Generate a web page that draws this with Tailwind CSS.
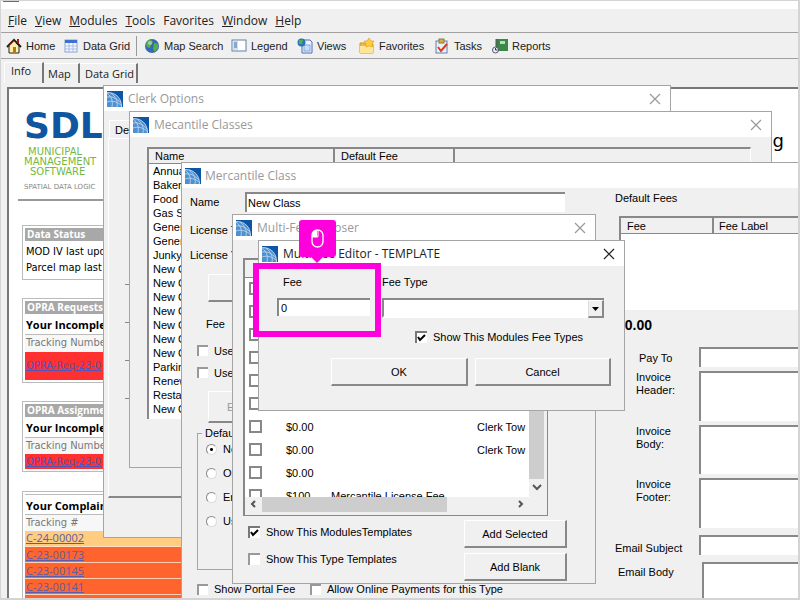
<!DOCTYPE html>
<html lang="en">
<head>
  <meta charset="UTF-8">
  <title>Clerk Options</title>
  <script src="https://cdn.jsdelivr.net/npm/@tailwindcss/browser@4"></script>
</head>
<body class="bg-[#f0f0f0] text-black text-[11px] leading-[14px] font-['Liberation_Sans',sans-serif] overflow-hidden">
  <svg class="hidden">
    <symbol id="globe" viewBox="0 0 16 16">
      <rect width="16" height="16" fill="#0d55a5"/>
      <path d="M0 1C9 1 15 7 15 16H0Z" fill="#4f90d0"/>
      <path d="M0 1.500C9 1.500 14.500 7 14.500 16M0 6C6 5 10 8 14 12M0 11C5 9 11 11 15 15M4 2C9 6 11 10 10 16M0 2C5 6 6 10 5 16" fill="none" stroke="#c3dbf2" stroke-width=".8"/>
    </symbol>
    <symbol id="close" viewBox="0 0 12 12">
      <path d="M1 1L11 11M11 1L1 11" fill="none" stroke="currentColor" stroke-width="1.2"/>
    </symbol>
  </svg>

  <div class="relative h-screen overflow-hidden flex flex-col border-l border-t border-r-2 border-b-2 border-[#d4d4d4]">
    <!-- main window -->
    <div class="h-2 bg-white shrink-0 pl-[2px]"><div class="w-4 h-px bg-[#3a78b0]"></div></div>
    <nav class="h-6 shrink-0 flex items-center gap-2 pl-[7px] text-[12px] font-['Open_Sans',sans-serif] text-[#222] border-b border-[#a0a0a0]">
      <a href="#"><u>F</u>ile</a>
      <a href="#"><u>V</u>iew</a>
      <a href="#"><u>M</u>odules</a>
      <a href="#"><u>T</u>ools</a>
      <a href="#">Favorites</a>
      <a href="#"><u>W</u>indow</a>
      <a href="#"><u>H</u>elp</a>
    </nav>
    <div class="h-[26px] shrink-0 flex items-center pl-[5px] border-b border-[#a0a0a0] text-[#222]">
      <button class="flex items-center gap-1 w-[57px]">
        <svg class="w-4 h-4" viewBox="0 0 16 16"><path d="M3 8v7h10V8L8 3Z" fill="#fff0a8" stroke="#222"/><path d="M1 9L8 2l7 7" fill="none" stroke="#222" stroke-width="2"/><path d="M3 8l5-5 2 2" fill="none" stroke="#c03020"/><path d="M11 1h2v4h-2z" fill="#a02018"/><rect x="7" y="9" width="3" height="6" fill="#b87818"/></svg>
        Home
      </button>
      <button class="flex items-center gap-1 w-[72px]">
        <svg class="w-4 h-4" viewBox="0 0 16 16"><rect x="2" y="2" width="12" height="12" fill="#f4f8ff" stroke="#8aa4d8"/><rect x="2" y="2" width="12" height="3" fill="#3f6fd0"/><path d="M2 8h12M2 11h12M6 5v9M10 5v9" stroke="#a9bde6"/></svg>
        Data Grid
      </button>
      <div class="w-px h-5 bg-[#999] mr-[7px] ml-px"></div>
      <button class="flex items-center gap-1 w-[87px]">
        <svg class="w-4 h-4" viewBox="0 0 16 16"><circle cx="8" cy="8" r="7" fill="#3568b8"/><path d="M3 3c3-2 5-1 6 1L7 7l-1 3-3-1-1-3ZM10 5l4 1v4l-3 4-2-3Z" fill="#58b040"/><circle cx="6" cy="5" r="2" fill="#cfe8e0" opacity=".6"/></svg>
        Map Search
      </button>
      <button class="flex items-center gap-1 w-[66px]">
        <svg class="w-4 h-4" viewBox="0 0 16 16"><rect x="1" y="2" width="14" height="11" fill="#fff" stroke="#5f7fa8"/><rect x="2" y="3" width="5" height="9" fill="#cfe0f5"/><path d="M3 5h3M3 7h3M3 9h3" stroke="#3f6fb0"/></svg>
        Legend
      </button>
      <button class="flex items-center gap-1 w-[62px]">
        <svg class="w-4 h-4" viewBox="0 0 16 16"><path d="M5 2h8l2 2v11H5Z" fill="#eef4ff" stroke="#4a6fb0"/><rect x="7" y="7" width="6" height="6" fill="#c9dcf5" stroke="#86a6d8"/><circle cx="4.500" cy="4.500" r="4" fill="#2f74b8"/><path d="M2 2l4 0-1 4-3 0Z" fill="#50b050"/></svg>
        Views
      </button>
      <button class="flex items-center gap-1 w-[75px]">
        <svg class="w-4 h-4" viewBox="0 0 16 16"><path d="M1 5h5l1 1h7v9H1Z" fill="#f0b848" stroke="#d8942c"/><path d="M1 8h13v7H1Z" fill="#ffe596"/><path d="M10 0l2 3 3 0-2 3 1 3-4-1-3 1 0-3-2-3 3 0Z" fill="#ffce3c" stroke="#d89c20" stroke-width=".6"/></svg>
        Favorites
      </button>
      <button class="flex items-center gap-1 w-[58px]">
        <svg class="w-4 h-4" viewBox="0 0 16 16"><rect x="2" y="3" width="11" height="12" fill="#e8f0fc" stroke="#6080b0"/><rect x="5" y="1" width="5" height="4" fill="#d0b050" stroke="#907830"/><path d="M4 9l3 4 6-7" fill="none" stroke="#e03818" stroke-width="2"/></svg>
        Tasks
      </button>
      <button class="flex items-center gap-1">
        <svg class="w-4 h-4" viewBox="0 0 16 16"><rect x="4" y="1" width="12" height="12" fill="#3c8848"/><rect x="8" y="3" width="5" height="3" fill="#b8dcb8"/><path d="M3 2h3M3 4h3M3 6h3M3 8h3" stroke="#556"/><circle cx="3.500" cy="12" r="3" fill="#eef" stroke="#556"/><path d="M3.500 10v2h2" fill="none" stroke="#333"/></svg>
        Reports
      </button>
    </div>
    <div class="flex items-end shrink-0 h-6 pl-[3px] font-['Open_Sans',sans-serif] text-[#222]">
      <button class="h-[21px] w-10 text-left pl-[6px] pb-1 border-t border-l border-white border-r-2 border-r-[#777]">Info</button>
      <button class="h-5 w-9 text-left pl-1 border-t border-white border-r-2 border-r-[#777]">Map</button>
      <button class="h-5 w-[58px] text-left pl-[5px] border-t border-white border-r-2 border-r-[#777]">Data Grid</button>
    </div>
    <main class="mt-1 ml-[6px] flex-1 min-h-0 overflow-hidden flex bg-white border-t-2 border-l-2 border-[#777]">
      <aside class="w-[212px] shrink-0 pl-[13px] font-['DejaVu_Sans_Condensed','DejaVu_Sans',sans-serif]">
        <div class="w-[120px] ml-[2px] pt-[16px] font-['DejaVu_Sans',sans-serif]">
          <div class="text-[36px] leading-[42px] font-bold text-[#0f55a0]">SDL</div>
          <div class="text-[10px] leading-[10px] text-[#76b83f]">
            <p class="pl-1">MUNICIPAL</p>
            <p>MANAGEMENT</p>
            <p class="pl-[6px]">SOFTWARE</p>
          </div>
          <p class="mt-[4px] text-[7px] leading-[12px] text-[#888] whitespace-nowrap">SPATIAL DATA LOGIC</p>
        </div>
        <div class="h-[2px] -ml-1 mt-[6px] bg-[#999]"></div>

        <section class="mt-6 p-[2px] border border-[#bbb]">
          <h3 class="h-[13px] leading-[13px] pl-[2px] bg-[#a8a8a8] text-white text-[10px] font-bold font-['Open_Sans',sans-serif]">Data Status</h3>
          <p class="pl-px leading-4 mt-[3px]">MOD IV last updated</p>
          <p class="pl-px leading-4 mb-px">Parcel map last updated</p>
        </section>

        <section class="mt-[18px] p-[2px] border border-[#bbb]">
          <h3 class="h-[13px] leading-[13px] pl-[2px] bg-[#a8a8a8] text-white text-[10px] font-bold font-['Open_Sans',sans-serif]">OPRA Requests</h3>
          <p class="pl-px h-[21px] leading-[21px] font-bold font-['Open_Sans',sans-serif] border-b border-[#bbb]">Your Incomplete</p>
          <p class="pl-px h-[17px] leading-[15px] text-[#777] bg-[#f7f7f7]">Tracking Number</p>
          <p class="pl-px h-7 leading-7 bg-[#ff3030]"><a href="#" class="underline text-[#5555b8]">OPRA-Req-23-0</a></p>
        </section>

        <section class="mt-[18px] p-[2px] border border-[#bbb]">
          <h3 class="h-[13px] leading-[13px] pl-[2px] bg-[#a8a8a8] text-white text-[10px] font-bold font-['Open_Sans',sans-serif]">OPRA Assignments</h3>
          <p class="pl-px h-[21px] leading-[21px] font-bold font-['Open_Sans',sans-serif] border-b border-[#bbb]">Your Incomplete</p>
          <p class="pl-px h-4 leading-[15px] text-[#777] bg-[#f7f7f7]">Tracking Number</p>
          <p class="pl-px h-[15px] leading-[15px] bg-[#ff3030]"><a href="#" class="underline text-[#5555b8]">OPRA-Req-23-0</a></p>
        </section>

        <section class="mt-[19px] p-[2px] border border-[#bbb]">
          <table class="w-full text-left">
            <tr><td class="p-0 pl-px pt-[3px] h-5 font-bold font-['Open_Sans',sans-serif] border-t border-b border-[#bbb]">Your Complaints</td></tr>
            <tr><th class="p-0 pl-px h-4 font-normal text-[#777] bg-[#f7f7f7]">Tracking #</th></tr>
            <tr class="h-4 bg-[#ffcc80] border-b border-[#ffe0c0]"><td class="p-0 pl-px font-['Open_Sans',sans-serif]"><a href="#" class="underline text-[#5c5ca8]">C-24-00002</a></td></tr>
            <tr class="h-4 bg-[#ff642e] border-b border-[#ffd0b0]"><td class="p-0 pl-px font-['Open_Sans',sans-serif]"><a href="#" class="underline text-[#5c5ca8]">C-23-00173</a></td></tr>
            <tr class="h-4 bg-[#ff642e] border-b border-[#ffd0b0]"><td class="p-0 pl-px font-['Open_Sans',sans-serif]"><a href="#" class="underline text-[#5c5ca8]">C-23-00145</a></td></tr>
            <tr class="h-4 bg-[#ff642e] border-b border-[#ffd0b0]"><td class="p-0 pl-px font-['Open_Sans',sans-serif]"><a href="#" class="underline text-[#5c5ca8]">C-23-00141</a></td></tr>
            <tr class="h-4 bg-[#ff642e]"><td class="p-0 pl-px font-['Open_Sans',sans-serif]"><a href="#" class="underline text-[#5c5ca8]">C-23-00134</a></td></tr>
          </table>
        </section>
      </aside>
      <p class="flex-1 text-right pr-[14px] pt-10 text-[18px] leading-6 font-['DejaVu_Sans',sans-serif]">g</p>
    </main>

    <!-- Clerk Options -->
    <section class="absolute left-[102px] top-[84px] w-[568px] h-[453px] flex flex-col bg-[#f0f0f0] border border-[#a5a5a5]">
      <header class="h-[25px] shrink-0 bg-white flex items-center pl-[3px] pr-[9px] text-[12px] text-[#999] font-['Open_Sans',sans-serif]">
        <svg class="w-4 h-4 mr-[5px]"><use href="#globe"/></svg>
        <h2 class="flex-1">Clerk Options</h2>
        <button aria-label="Close"><svg class="w-3 h-3"><use href="#close"/></svg></button>
      </header>
      <button class="self-start mt-[9px] ml-[5px] h-[18px] w-[60px] pl-[5px] text-left border-t border-l border-white">Default</button>
      <div class="mx-1 h-[360px] pl-4 flex flex-col gap-[10px] pt-[118px] border-l border-t border-white border-b-2 border-b-[#888]">
        <button class="w-20 h-7 border-b border-[#888]" aria-label="Classes"></button>
        <button class="w-20 h-7 border-b border-[#888]" aria-label="Fees"></button>
        <button class="w-20 h-7 border-b border-[#888]" aria-label="Types"></button>
        <button class="w-20 h-7 border-b border-[#888]" aria-label="Templates"></button>
      </div>
    </section>

    <!-- Mecantile Classes -->
    <section class="absolute left-[128px] top-[110px] w-[643px] h-[357px] flex flex-col bg-[#f0f0f0] border border-[#a5a5a5]">
      <header class="h-[25px] shrink-0 bg-white flex items-center pl-[3px] pr-[9px] text-[12px] text-[#999] font-['Open_Sans',sans-serif]">
        <svg class="w-4 h-4 mr-[5px]"><use href="#globe"/></svg>
        <h2 class="flex-1">Mecantile Classes</h2>
        <button aria-label="Close"><svg class="w-3 h-3"><use href="#close"/></svg></button>
      </header>
      <div class="mt-[10px] ml-[17px] mr-5 h-[272px] overflow-hidden bg-white border-t-2 border-l-2 border-[#888] border-r border-r-white">
        <div class="grid grid-cols-[186px_120px_1fr] h-[15px] bg-[#f0f0f0] border-b border-[#888]">
          <span class="pl-[6px] border-r-2 border-[#888]">Name</span>
          <span class="pl-[6px] border-r-2 border-[#888]">Default Fee</span>
          <span></span>
        </div>
        <ul class="pl-1">
          <li>Annual</li>
          <li>Bakery</li>
          <li>Food Truck</li>
          <li>Gas Station</li>
          <li>General</li>
          <li>General</li>
          <li>Junkyard</li>
          <li>New Class</li>
          <li>New Class</li>
          <li>New Class</li>
          <li>New Class</li>
          <li>New Class</li>
          <li>New Class</li>
          <li>New Class</li>
          <li>Parking</li>
          <li>Renewal</li>
          <li>Restaurant</li>
          <li>New Class</li>
        </ul>
      </div>
    </section>

    <!-- Mercantile Class -->
    <section class="absolute left-[180px] right-0 top-[161px] bottom-0 flex flex-col overflow-hidden bg-[#f0f0f0] border-t border-l border-[#a5a5a5]">
      <header class="h-[25px] shrink-0 bg-white flex items-center pl-[3px] text-[12px] text-[#999] font-['Open_Sans',sans-serif]">
        <svg class="w-4 h-4 mr-1"><use href="#globe"/></svg>
        <h2>Mercantile Class</h2>
      </header>
      <div class="flex-1 min-h-0 flex">
        <div class="w-[433px] shrink-0 pl-2 pt-1">
          <div class="flex items-center h-5">
            <label for="name" class="w-[55px]">Name</label>
            <input id="name" value="New Class" class="w-80 h-5 px-px bg-white border-t-2 border-l-2 border-[#888]">
          </div>
          <p class="h-4 mt-[10px] leading-4">License Type</p>
          <p class="h-4 mt-[9px] leading-4">License Year</p>
          <button class="block ml-[18px] mt-[11px] w-[100px] h-7 border-t border-l border-white border-b-2 border-b-[#888]" aria-label="Fees"></button>
          <p class="ml-4 mt-[15px]">Fee</p>
          <label class="flex items-center gap-[6px] ml-[7px] mt-[13px] h-[13px]"><input type="checkbox" class="appearance-none w-[11px] h-[11px] bg-white border-t-2 border-l-2 border-[#999]">Use Default</label>
          <label class="flex items-center gap-[6px] ml-[7px] mt-[9px] h-[13px]"><input type="checkbox" class="appearance-none w-[11px] h-[11px] bg-white border-t-2 border-l-2 border-[#999]">Use Portal</label>
          <button class="block ml-[18px] mt-3 w-[100px] h-8 pl-[18px] text-left text-[#999] border-t border-l border-white border-b-2 border-b-[#888]">Edit</button>
          <fieldset class="ml-[7px] mt-[3px] w-[300px] h-[144px] pl-2 border border-[#a5a5a5]">
            <legend class="-ml-1 px-[3px]">Default</legend>
            <label class="flex items-center gap-[6px] h-[14px] mt-[2px]"><input type="radio" name="due" checked class="appearance-none w-[11px] h-[11px] rounded-full bg-[radial-gradient(circle,#000_1px,#fff_2px)] border border-[#888] border-r-[#ddd] border-b-[#ddd]">None</label>
            <label class="flex items-center gap-[6px] h-[14px] mt-[10px]"><input type="radio" name="due" class="appearance-none w-[11px] h-[11px] rounded-full bg-white border border-[#888] border-r-[#ddd] border-b-[#ddd]">On</label>
            <label class="flex items-center gap-[6px] h-[14px] mt-[10px]"><input type="radio" name="due" class="appearance-none w-[11px] h-[11px] rounded-full bg-white border border-[#888] border-r-[#ddd] border-b-[#ddd]">End</label>
            <label class="flex items-center gap-[6px] h-[14px] mt-[10px]"><input type="radio" name="due" class="appearance-none w-[11px] h-[11px] rounded-full bg-white border border-[#888] border-r-[#ddd] border-b-[#ddd]">Use</label>
          </fieldset>
          <div class="flex ml-[7px] mt-3">
            <label class="flex items-center gap-[6px] w-[113px]"><input type="checkbox" class="appearance-none w-[11px] h-[11px] bg-white border-t-2 border-l-2 border-[#999]">Show Portal Fee</label>
            <label class="flex items-center gap-[6px]"><input type="checkbox" class="appearance-none w-[11px] h-[11px] bg-white border-t-2 border-l-2 border-[#999]">Allow Online Payments for this Type</label>
          </div>
        </div>
        <div class="flex-1 min-w-0 pt-[3px]">
          <h3>Default Fees</h3>
          <div class="mt-[11px] ml-1 h-[94px] bg-white border-t-2 border-l-2 border-[#888]">
            <div class="flex h-4 bg-[#f0f0f0] border-b border-[#888] leading-[17px]">
              <span class="w-[93px] pl-[6px] border-r-2 border-[#888]">Fee</span>
              <span class="pl-[5px]">Fee Label</span>
            </div>
          </div>
          <p class="mt-2 ml-[2px] text-[14px] font-bold">$0.00</p>
          <div class="mt-[15px] grid grid-cols-[84px_1fr] gap-y-1">
            <label for="pay" class="pl-6 pt-1">Pay To</label>
            <input id="pay" class="w-full min-w-0 h-5 bg-white border-t-2 border-l-2 border-[#888]">
            <label for="header" class="pl-[21px] leading-[13px]">Invoice<br>Header:</label>
            <textarea id="header" class="block w-full h-[50px] resize-none bg-white border-t-2 border-l-2 border-[#888]"></textarea>
            <label for="body" class="pl-[21px] leading-[13px]">Invoice<br>Body:</label>
            <textarea id="body" class="block w-full h-[49px] resize-none bg-white border-t-2 border-l-2 border-[#888]"></textarea>
            <label for="footer" class="pl-[21px] leading-[13px]">Invoice<br>Footer:</label>
            <textarea id="footer" class="block w-full h-[50px] resize-none bg-white border-t-2 border-l-2 border-[#888]"></textarea>
            <label for="subject" class="pt-[9px]">Email Subject</label>
            <input id="subject" class="mt-[3px] w-full min-w-0 h-5 bg-white border-t-2 border-l-2 border-[#888]">
            <label for="mail" class="pl-[3px] pt-[6px]">Email Body</label>
            <div class="pl-[3px] pt-[3px]"><textarea id="mail" class="block w-full h-[50px] resize-none bg-white border-t-2 border-l-2 border-[#888]"></textarea></div>
          </div>
        </div>
      </div>
    </section>

    <!-- Multi-Fee Chooser -->
    <section class="absolute left-[231px] top-[213px] w-[364px] h-[370px] flex flex-col bg-[#f0f0f0] border border-[#a5a5a5]">
      <header class="h-[25px] shrink-0 bg-white flex items-center pl-[3px] pr-[9px] text-[12px] text-[#999] font-['Open_Sans',sans-serif]">
        <svg class="w-4 h-4 mr-[5px]"><use href="#globe"/></svg>
        <h2 class="flex-1">Multi-Fee Chooser</h2>
        <button aria-label="Close"><svg class="w-3 h-3"><use href="#close"/></svg></button>
      </header>
      <div class="mt-[18px] ml-[10px] w-[305px] h-[258px] flex flex-col border-2 border-[#888] border-r border-b">
        <div class="flex flex-1 min-h-0">
          <div class="flex-1 overflow-hidden bg-white">
            <table class="w-full table-fixed text-left">
              <thead>
                <tr class="h-[17px] bg-[#f0f0f0] border-b border-[#888]"><th class="w-[41px] p-0 pl-2 font-normal">Fee</th><th class="w-[45px]"></th><th></th><th class="w-[52px]"></th></tr>
              </thead>
              <tbody>
                <tr class="h-[23px]"><td class="p-0 pl-1"><input type="checkbox" aria-label="Select fee" class="appearance-none block w-[13px] h-[13px] bg-white border-2 border-[#888]"></td></tr>
                <tr class="h-[23px]"><td class="p-0 pl-1"><input type="checkbox" aria-label="Select fee" class="appearance-none block w-[13px] h-[13px] bg-white border-2 border-[#888]"></td></tr>
                <tr class="h-[23px]"><td class="p-0 pl-1"><input type="checkbox" aria-label="Select fee" class="appearance-none block w-[13px] h-[13px] bg-white border-2 border-[#888]"></td></tr>
                <tr class="h-[23px]"><td class="p-0 pl-1"><input type="checkbox" aria-label="Select fee" class="appearance-none block w-[13px] h-[13px] bg-white border-2 border-[#888]"></td></tr>
                <tr class="h-[23px]"><td class="p-0 pl-1"><input type="checkbox" aria-label="Select fee" class="appearance-none block w-[13px] h-[13px] bg-white border-2 border-[#888]"></td></tr>
                <tr class="h-[23px]"><td class="p-0 pl-1"><input type="checkbox" aria-label="Select fee" class="appearance-none block w-[13px] h-[13px] bg-white border-2 border-[#888]"></td></tr>
                <tr class="h-[23px]"><td class="p-0 pl-1"><input type="checkbox" aria-label="Select fee" class="appearance-none block w-[13px] h-[13px] bg-white border-2 border-[#888]"></td><td class="p-0">$0.00</td><td></td><td class="p-0 whitespace-nowrap">Clerk Tow</td></tr>
                <tr class="h-[23px]"><td class="p-0 pl-1"><input type="checkbox" aria-label="Select fee" class="appearance-none block w-[13px] h-[13px] bg-white border-2 border-[#888]"></td><td class="p-0">$0.00</td><td></td><td class="p-0 whitespace-nowrap">Clerk Tow</td></tr>
                <tr class="h-[23px]"><td class="p-0 pl-1"><input type="checkbox" aria-label="Select fee" class="appearance-none block w-[13px] h-[13px] bg-white border-2 border-[#888]"></td><td class="p-0">$0.00</td><td></td><td></td></tr>
                <tr class="h-[23px]"><td class="p-0 pl-1"><input type="checkbox" aria-label="Select fee" class="appearance-none block w-[13px] h-[13px] bg-white border-2 border-[#888]"></td><td class="p-0">$100</td><td class="p-0 whitespace-nowrap">Mercantile License Fee</td><td></td></tr>
              </tbody>
            </table>
          </div>
          <div class="w-[18px] flex flex-col">
            <div class="flex-1 w-[15px] bg-[#cdcdcd]"></div>
            <svg class="w-[15px] h-[18px]" viewBox="0 0 15 18"><path d="M4 6l4 4 4-4" fill="none" stroke="#555" stroke-width="2"/></svg>
          </div>
        </div>
        <div class="h-[18px] shrink-0 flex">
          <svg class="w-[17px] h-[15px]" viewBox="0 0 17 15"><path d="M10 4L7 7l3 3" fill="none" stroke="#555" stroke-width="2"/></svg>
          <div class="w-[185px] h-[15px] bg-[#cdcdcd]"></div>
          <svg class="w-[17px] h-[15px] ml-[66px]" viewBox="0 0 17 15"><path d="M6 4l3 3-3 3" fill="none" stroke="#555" stroke-width="2"/></svg>
        </div>
      </div>
      <div class="flex justify-between pl-[15px] pr-7 pt-1">
        <div class="pt-[5px] space-y-[13px]">
          <label class="flex items-center gap-[6px]">
            <span class="grid"><input type="checkbox" checked class="peer appearance-none col-start-1 row-start-1 w-3 h-3 bg-white border-t-2 border-l-2 border-[#777]"><svg class="hidden peer-checked:block col-start-1 row-start-1 w-3 h-3 pointer-events-none" viewBox="0 0 12 12"><path d="M3 6l2 3 5-5" fill="none" stroke="#000" stroke-width="2"/></svg></span>
            Show This ModulesTemplates
          </label>
          <label class="flex items-center gap-[6px]"><input type="checkbox" class="appearance-none w-3 h-3 bg-white border-t-2 border-l-2 border-[#999]">Show This Type Templates</label>
        </div>
        <div class="flex flex-col gap-[5px]">
          <button class="w-[103px] h-7 border border-r-2 border-b-2 border-t-white border-l-white border-r-[#888] border-b-[#888]">Add Selected</button>
          <button class="w-[103px] h-7 border border-r-2 border-b-2 border-t-white border-l-white border-r-[#888] border-b-[#888]">Add Blank</button>
        </div>
      </div>
    </section>

    <!-- Multi-Fee Editor -->
    <section class="absolute left-[257px] top-[239px] w-[367px] h-[171px] bg-[#f0f0f0] border border-[#a5a5a5]">
      <header class="h-[25px] bg-white flex items-center pl-[3px] pr-[9px] text-[12px] text-[#222] font-['Open_Sans',sans-serif]">
        <svg class="w-4 h-4 mr-[5px]"><use href="#globe"/></svg>
        <h2 class="flex-1">Multi-Fee Editor - TEMPLATE</h2>
        <button aria-label="Close"><svg class="w-3 h-3"><use href="#close"/></svg></button>
      </header>
      <div class="grid grid-cols-[105px_1fr] pl-[18px] pr-5 pt-[9px]">
        <label for="fee" class="pl-[6px]">Fee</label>
        <label for="feeType">Fee Type</label>
        <input id="fee" value="0" class="mt-[9px] w-[93px] h-[18px] pl-[2px] bg-white border-t-2 border-l-2 border-[#888]">
        <div class="mt-[9px] grid">
          <select id="feeType" class="col-start-1 row-start-1 appearance-none w-full h-5 bg-white border-2 border-[#888] border-b-white border-r"></select>
          <span class="col-start-1 row-start-1 justify-self-end w-4 h-[18px] mt-[2px] bg-[#f0f0f0] border border-r-2 border-b-2 border-[#888] border-t-white border-l-[#ddd] grid place-items-center pointer-events-none"><svg class="w-[7px] h-1" viewBox="0 0 7 4"><path d="M0 0h7L3.500 4Z"/></svg></span>
        </div>
      </div>
      <label class="flex items-center gap-[6px] ml-[156px] mt-3">
        <span class="grid"><input type="checkbox" checked class="peer appearance-none col-start-1 row-start-1 w-3 h-3 bg-white border-t-2 border-l-2 border-[#777]"><svg class="hidden peer-checked:block col-start-1 row-start-1 w-3 h-3 pointer-events-none" viewBox="0 0 12 12"><path d="M3 6l2 3 5-5" fill="none" stroke="#000" stroke-width="2"/></svg></span>
        Show This Modules Fee Types
      </label>
      <div class="flex gap-[7px] ml-[72px] mt-[14px]">
        <button class="w-[137px] h-7 border border-r-2 border-b-2 border-t-white border-l-white border-r-[#888] border-b-[#888]">OK</button>
        <button class="w-[136px] h-7 border border-r-2 border-b-2 border-t-white border-l-white border-r-[#888] border-b-[#888]">Cancel</button>
      </div>
    </section>

    <!-- click hint -->
    <div class="absolute left-[252px] top-[262px] w-32 h-[74px] border-6 border-[#ff00dc] pointer-events-none"></div>
    <div class="absolute left-[298px] top-[219px] w-[37px] h-[37px] rounded-[3px] bg-[#ff00dc] grid place-items-center pointer-events-none">
      <svg class="w-[13px] h-[19px]" viewBox="0 0 13 19" fill="none" stroke="#fff"><path d="M6 1v7H1V6a5 5 0 0 1 5-5Z" fill="#fff" stroke="none"/><rect x="1" y="1" width="11" height="17" rx="5.500" stroke-width="1.400"/><path d="M1 8h6V1"/></svg>
    </div>
    <svg class="absolute left-[310px] top-[256px] w-3 h-[6px]" viewBox="0 0 12 6"><path d="M0 0h12L6 6Z" fill="#ff00dc"/></svg>
  </div>
</body>
</html>
